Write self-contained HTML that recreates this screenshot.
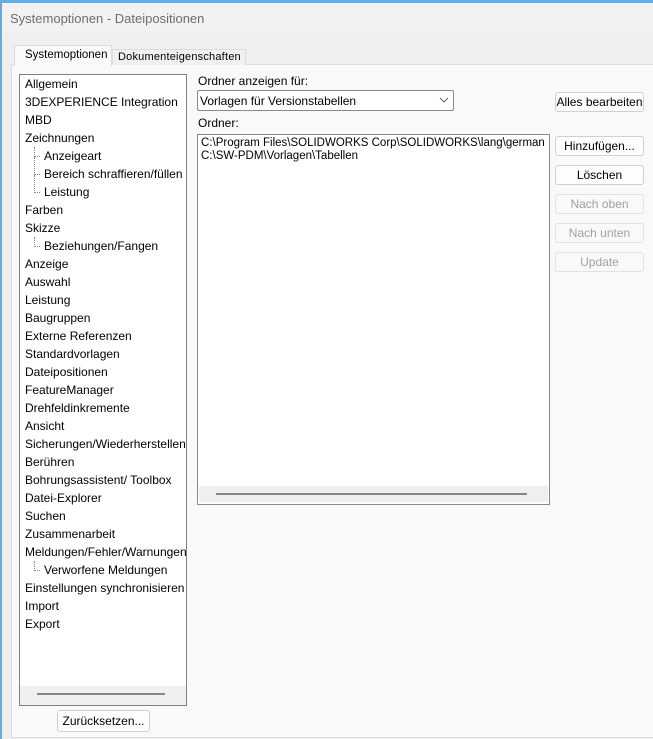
<!DOCTYPE html>
<html><head><meta charset="utf-8"><style>
*{margin:0;padding:0;box-sizing:border-box}
body{width:653px;height:739px;overflow:hidden;background:#efefef;font-family:"Liberation Sans",sans-serif;font-size:12px;color:#000;position:relative}
.a{position:absolute}
.btn{position:absolute;left:555px;width:89px;height:20px;background:#fdfdfd;border:1px solid #d0d0d0;border-radius:3px;text-align:center;line-height:18px;font-size:12px}
.dis{color:#a0a0a0;background:#f9f9f9;border-color:#e2e2e2}
.t{position:absolute;left:5px;white-space:nowrap;line-height:18px}
.s{left:24px}
.d{position:absolute;border-left:1px dotted #888;border-bottom:1px dotted #888;width:6px}
</style></head><body>
<div class="a" style="left:0;top:0;width:653px;height:3px;background:#5fb0ea;border-top-left-radius:6px"></div>
<div class="a" style="left:0;top:0;width:2px;height:739px;background:#6fa7d6"></div>
<div class="a" style="left:2px;top:3px;width:651px;height:30px;background:#f2f2f2"></div>
<div class="a" style="left:10px;top:11px;color:#6d6d6d;font-size:13px">Systemoptionen - Dateipositionen</div>
<div class="a" style="left:11px;top:64px;width:642px;height:674px;background:#f9f9f9;border:1px solid #dcdcdc;border-right:none"></div>
<div class="a" style="left:14px;top:45px;width:98px;height:21px;background:#f9f9f9;border:1px solid #dcdcdc;border-bottom:none;padding:3px 0 0 10px;font-size:11.5px;white-space:nowrap">Systemoptionen</div>
<div class="a" style="left:112px;top:49px;width:134px;height:16px;background:#f0f0f0;border:1px solid #dcdcdc;border-bottom:none;padding:1px 0 0 5px;font-size:11px;white-space:nowrap;letter-spacing:0.2px">Dokumenteigenschaften</div>

<div class="a" style="left:19px;top:74px;width:168px;height:632px;background:#fff;border:1px solid #808080;overflow:hidden">
<div class="t" style="top:0px">Allgemein</div>
<div class="t" style="top:18px">3DEXPERIENCE Integration</div>
<div class="t" style="top:36px">MBD</div>
<div class="t" style="top:54px">Zeichnungen</div>
<div class="d" style="left:14px;top:72px;height:10px"></div><div class="t s" style="top:72px">Anzeigeart</div>
<div class="d" style="left:14px;top:82px;height:18px"></div><div class="t s" style="top:90px">Bereich schraffieren/füllen</div>
<div class="d" style="left:14px;top:100px;height:18px"></div><div class="t s" style="top:108px">Leistung</div>
<div class="t" style="top:126px">Farben</div>
<div class="t" style="top:144px">Skizze</div>
<div class="d" style="left:14px;top:162px;height:10px"></div><div class="t s" style="top:162px">Beziehungen/Fangen</div>
<div class="t" style="top:180px">Anzeige</div>
<div class="t" style="top:198px">Auswahl</div>
<div class="t" style="top:216px">Leistung</div>
<div class="t" style="top:234px">Baugruppen</div>
<div class="t" style="top:252px">Externe Referenzen</div>
<div class="t" style="top:270px">Standardvorlagen</div>
<div class="t" style="top:288px">Dateipositionen</div>
<div class="t" style="top:306px">FeatureManager</div>
<div class="t" style="top:324px">Drehfeldinkremente</div>
<div class="t" style="top:342px">Ansicht</div>
<div class="t" style="top:360px">Sicherungen/Wiederherstellen</div>
<div class="t" style="top:378px">Berühren</div>
<div class="t" style="top:396px">Bohrungsassistent/ Toolbox</div>
<div class="t" style="top:414px">Datei-Explorer</div>
<div class="t" style="top:432px">Suchen</div>
<div class="t" style="top:450px">Zusammenarbeit</div>
<div class="t" style="top:468px">Meldungen/Fehler/Warnungen</div>
<div class="d" style="left:14px;top:486px;height:10px"></div><div class="t s" style="top:486px">Verworfene Meldungen</div>
<div class="t" style="top:504px">Einstellungen synchronisieren</div>
<div class="t" style="top:522px">Import</div>
<div class="t" style="top:540px">Export</div>
<div class="a" style="left:0;top:611px;width:166px;height:19px;background:#f0f0f0"></div>
<div class="a" style="left:17px;top:618px;width:128px;height:2px;background:#858585"></div>
</div>
<div class="a" style="left:57px;top:710px;width:93px;height:22px;background:#fdfdfd;border:1px solid #d0d0d0;border-radius:3px;text-align:center;line-height:20px">Zurücksetzen...</div>

<div class="a" style="left:198px;top:74px">Ordner anzeigen für:</div>
<div class="a" style="left:197px;top:90px;width:257px;height:21px;background:#fff;border:1px solid #8a8a8a;border-radius:2px;padding:3px 0 0 2px">Vorlagen für Versionstabellen
<svg class="a" style="left:241px;top:6px" width="10" height="6"><path d="M1 1L5 5L9 1" fill="none" stroke="#666" stroke-width="1"/></svg></div>
<div class="a" style="left:198px;top:116px">Ordner:</div>
<div class="a" style="left:197px;top:134px;width:353px;height:371px;background:#fff;border:1px solid #8a8a8a">
<div class="a" style="left:3px;top:2px;line-height:13px;white-space:nowrap;font-size:11.5px">C:\Program Files\SOLIDWORKS Corp\SOLIDWORKS\lang\german<br>C:\SW-PDM\Vorlagen\Tabellen</div>
<div class="a" style="left:1px;top:351px;width:349px;height:16px;background:#efefef"></div>
<div class="a" style="left:18px;top:358px;width:311px;height:2px;background:#858585"></div>
</div>

<div class="btn" style="top:92px">Alles bearbeiten</div>
<div class="btn" style="top:136px">Hinzufügen...</div>
<div class="btn" style="top:165px">Löschen</div>
<div class="btn dis" style="top:194px">Nach oben</div>
<div class="btn dis" style="top:223px">Nach unten</div>
<div class="btn dis" style="top:252px">Update</div>
</body></html>
